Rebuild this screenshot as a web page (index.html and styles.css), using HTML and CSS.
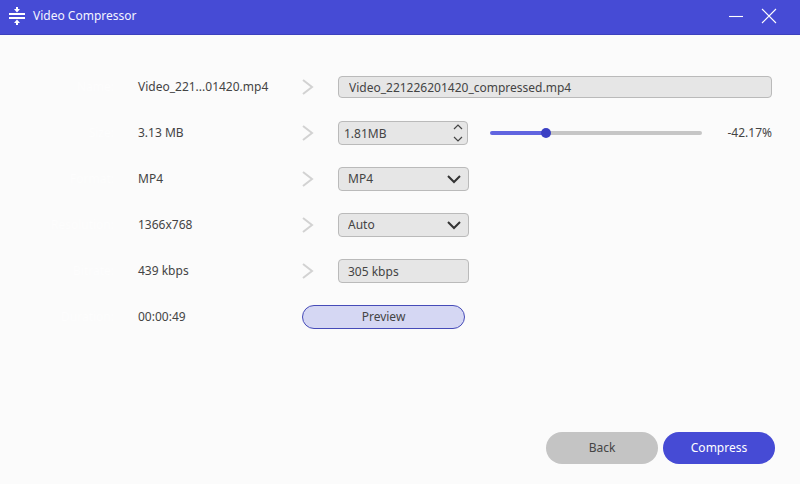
FILE: index.html
```html
<!DOCTYPE html>
<html lang="en">

<head>
    <meta charset="UTF-8" />
    <meta name="viewport" content="width=device-width, initial-scale=1.0" />
    <title>Video Compressor</title>
    <link rel="stylesheet" href="styles.css">
</head>

<body>
    <header class="titlebar">
        <svg class="logo" width="16" height="20" viewBox="0 0 16 20">
            <path d="M0 8h16M0 12h16" stroke="#fff" stroke-width="2" />
            <path d="M8 1v3M8 19v-3" stroke="#fff" stroke-width="2" />
            <path d="M5 3h6L8 6.4zM5 17h6L8 13.6z" fill="#fff" />
        </svg>
        <h1>Video Compressor</h1>
        <button class="window-btn" aria-label="Minimize">
            <svg width="16" height="16" viewBox="0 0 16 16"><path d="M1 8.5h14" /></svg>
        </button>
        <button class="window-btn" aria-label="Close">
            <svg width="16" height="16" viewBox="0 0 16 16"><path d="M1 1l14 14M15 1L1 15" /></svg>
        </button>
    </header>

    <main class="settings">
        <div class="row">
            <label for="name">Name:</label>
            <span class="source">Video_221...01420.mp4</span>
            <svg class="arrow" width="12" height="16" viewBox="0 0 12 16"><path d="M1 1l9 7-9 7" /></svg>
            <input class="field name" id="name" type="text" value="Video_221226201420_compressed.mp4">
        </div>
        <div class="row">
            <label for="size">Size:</label>
            <span class="source">3.13 MB</span>
            <svg class="arrow" width="12" height="16" viewBox="0 0 12 16"><path d="M1 1l9 7-9 7" /></svg>
            <div class="size-group">
                <div class="spinner">
                    <input class="field size" id="size" type="text" value="1.81MB">
                    <div class="steps">
                        <button aria-label="Increase"><svg width="10" height="6" viewBox="0 0 10 6"><path d="M1 5l4-4 4 4" /></svg></button>
                        <button aria-label="Decrease"><svg width="10" height="6" viewBox="0 0 10 6"><path d="M1 1l4 4 4-4" /></svg></button>
                    </div>
                </div>
                <input class="slider" id="ratio" type="range" min="0" max="100" value="25" aria-label="Compression ratio">
                <output class="percent" for="ratio">-42.17%</output>
            </div>
        </div>
        <div class="row">
            <label for="format">Format:</label>
            <span class="source">MP4</span>
            <svg class="arrow" width="12" height="16" viewBox="0 0 12 16"><path d="M1 1l9 7-9 7" /></svg>
            <div class="dropdown">
                <select class="field" id="format">
                    <option>MP4</option>
                </select>
                <svg width="14" height="9" viewBox="0 0 14 9"><path d="M1 1l6 6 6-6" /></svg>
            </div>
        </div>
        <div class="row">
            <label for="resolution">Resolution:</label>
            <span class="source">1366x768</span>
            <svg class="arrow" width="12" height="16" viewBox="0 0 12 16"><path d="M1 1l9 7-9 7" /></svg>
            <div class="dropdown">
                <select class="field" id="resolution">
                    <option>Auto</option>
                </select>
                <svg width="14" height="9" viewBox="0 0 14 9"><path d="M1 1l6 6 6-6" /></svg>
            </div>
        </div>
        <div class="row">
            <label for="bitrate">Bitrate:</label>
            <span class="source">439 kbps</span>
            <svg class="arrow" width="12" height="16" viewBox="0 0 12 16"><path d="M1 1l9 7-9 7" /></svg>
            <input class="field bitrate" id="bitrate" type="text" value="305 kbps" readonly>
        </div>
        <div class="row">
            <label for="duration">Duration:</label>
            <output class="source" id="duration">00:00:49</output>
            <button class="preview">Preview</button>
        </div>
    </main>

    <footer class="actions">
        <button class="back">Back</button>
        <button class="compress">Compress</button>
    </footer>
</body>

</html>
```

FILE: styles.css
```css
* {
    box-sizing: border-box;
}

body {
    display: flex;
    flex-direction: column;
    min-height: 100vh;
    margin: 0;
    background-color: #fbfbfb;
    color: #444;
    font-family: 'Noto Sans', sans-serif;
    font-size: 12px;
    line-height: 16px;
}

button,
input,
select {
    font: inherit;
    color: inherit;
}

button {
    padding: 0;
    border: none;
    cursor: pointer;
}

svg {
    fill: none;
}

/* Title bar */
.titlebar {
    display: flex;
    align-items: center;
    height: 35px;
    padding: 0 23px 2px 9px;
    background-color: #464bd5;
    border-bottom: 1px solid #3c41bd;
    color: #f4f4ff;
}

.titlebar h1 {
    flex: 1;
    margin: 0 0 0 8px;
    font-size: 12px;
    font-weight: normal;
}

.window-btn {
    display: flex;
    margin-left: 17px;
    background: none;
}

.window-btn path {
    stroke: #fff;
    stroke-width: 1.1;
}

/* Settings rows */
.settings {
    display: flex;
    flex: 1;
    flex-direction: column;
    gap: 22px;
    padding: 40px 28px 0 32px;
}

.row {
    display: grid;
    grid-template-columns: 82px 140px 12px 1fr;
    column-gap: 24px;
    align-items: center;
    height: 24px;
}

.row label {
    color: #fdfdfd;
    text-align: right;
}

.arrow {
    stroke: #d2d2d2;
    stroke-width: 2;
}

.field {
    width: 131px;
    height: 24px;
    padding: 0 9px;
    background-color: #e6e6e6;
    border: 1px solid #bababa;
    border-radius: 4px;
    outline: none;
}

.name {
    width: 100%;
    height: 22px;
    padding: 0 10px;
}

.size-group {
    display: flex;
    align-items: center;
}

.spinner,
.dropdown {
    position: relative;
    width: 131px;
    height: 24px;
}

.spinner,
.size {
    width: 130px;
}

.size {
    padding: 0 24px 0 5px;
}

.steps {
    position: absolute;
    top: 0;
    right: 5px;
    display: flex;
    flex-direction: column;
    justify-content: space-between;
    height: 100%;
    padding: 3px 0;
}

.steps button {
    display: flex;
    background: none;
}

.steps path {
    stroke: #444;
    stroke-width: 1.2;
}

.dropdown select {
    appearance: none;
}

.dropdown svg {
    position: absolute;
    top: 8px;
    right: 8px;
    stroke: #333;
    stroke-width: 2;
    pointer-events: none;
}

/* Ratio slider */
.slider {
    flex: 1;
    min-width: 0;
    height: 10px;
    margin: 0 20px 0 22px;
    appearance: none;
    background: none;
}

.slider::-webkit-slider-runnable-track {
    height: 4px;
    border-radius: 2px;
    background: linear-gradient(to right, #6165e0 26%, #c6c6c6 26%);
}

.slider::-webkit-slider-thumb {
    width: 10px;
    height: 10px;
    margin-top: -3px;
    appearance: none;
    background-color: #3b40c4;
    border-radius: 50%;
}

.percent {
    width: 50px;
    text-align: right;
}

/* Buttons */
.preview {
    width: 163px;
    height: 24px;
    background-color: #d5d7f3;
    border: 1px solid #464bb8;
    border-radius: 12px;
}

.actions {
    display: flex;
    justify-content: flex-end;
    gap: 5px;
    padding: 0 25px 20px;
}

.actions button {
    width: 112px;
    height: 32px;
    border-radius: 16px;
}

.back {
    background-color: #c4c4c4;
}

.actions .compress {
    background-color: #464bd5;
    color: #fff;
}
```
